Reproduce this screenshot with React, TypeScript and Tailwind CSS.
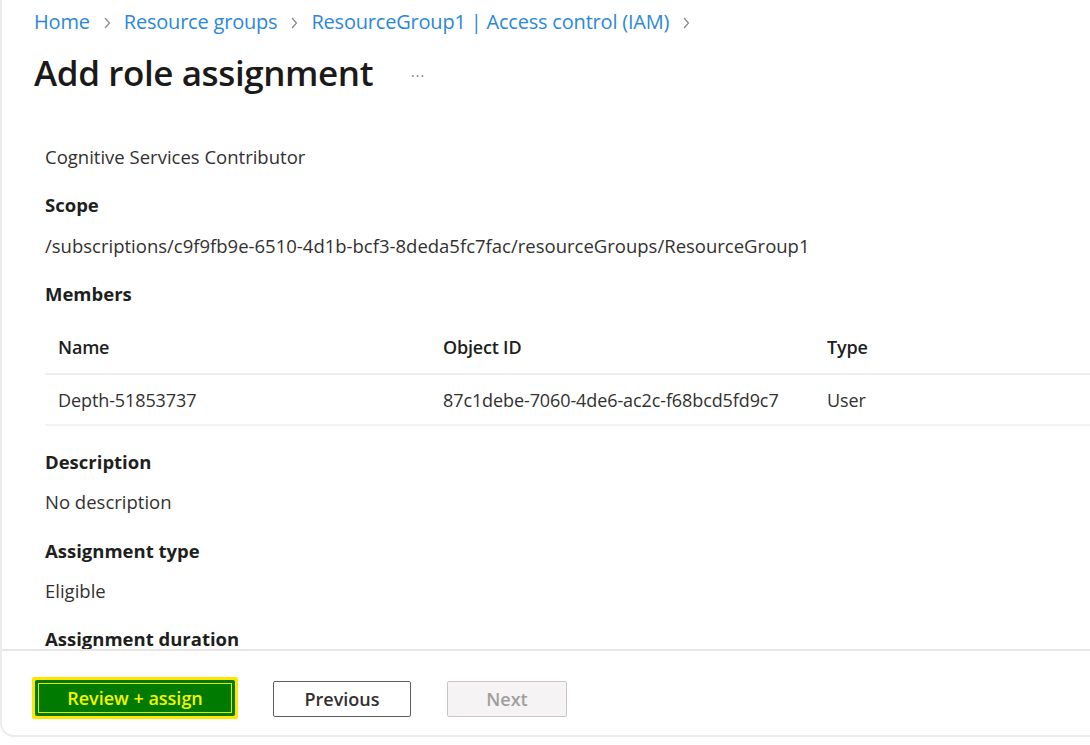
import React from "react";

const font = { fontFamily: '"Open Sans", "Noto Sans", Arial, sans-serif' };

function Chevron() {
  return (
    <svg width="10" height="14" viewBox="0 0 10 14" className="mx-[12px] mt-[2px]">
      <path d="M3 2 L7.5 7 L3 12" fill="none" stroke="#8a8886" strokeWidth="1.2" />
    </svg>
  );
}

export default function App() {
  return (
    <div className="w-[1090px] h-[745px] bg-white overflow-hidden" style={font}>
      <div className="h-[737px] border-l-2 border-b-2 border-[#ececec] rounded-bl-[14px] flex flex-col">
        <div className="flex items-center pl-[32px] pt-[11px] h-[32px] text-[20px] text-[#2b88d8] tracking-[-0.2px]">
          <span>Home</span>
          <Chevron />
          <span>Resource groups</span>
          <Chevron />
          <span>ResourceGroup1 | Access control (IAM)</span>
          <Chevron />
        </div>
        <div className="flex items-center pl-[32px] mt-[21px] h-[40px]">
          <h1 className="text-[35px] font-semibold text-[#1b1a19] tracking-[-0.4px]">Add role assignment</h1>
          <span className="ml-[38px] mt-[4px] text-[#7a7a7a] text-[14px] tracking-[1px]">···</span>
        </div>
        <div className="flex-1 pl-[43px] pt-[52px] text-[#323130] text-[18.5px] overflow-hidden">
          <div className="h-[24px] leading-[24px]">Cognitive Services Contributor</div>
          <div className="mt-[24px] h-[24px] leading-[24px] font-bold text-[#201f1e]">Scope</div>
          <div className="mt-[17px] h-[24px] leading-[24px]">/subscriptions/c9f9fb9e-6510-4d1b-bcf3-8deda5fc7fac/resourceGroups/ResourceGroup1</div>
          <div className="mt-[24px] h-[24px] leading-[24px] font-bold text-[#201f1e]">Members</div>
          <div className="mt-[15px]">
            <div className="grid grid-cols-[385px_384px_1fr] h-[54px] items-center border-b-2 border-[#efefef] pl-[13px] font-semibold text-[#201f1e] text-[18px] tracking-[-0.2px]">
              <span>Name</span>
              <span>Object ID</span>
              <span>Type</span>
            </div>
            <div className="grid grid-cols-[385px_384px_1fr] h-[51px] items-center border-b-2 border-[#f3f3f3] pl-[13px] text-[18px] tracking-[-0.1px]">
              <span className="mt-[2px]">Depth-51853737</span>
              <span className="mt-[2px]">87c1debe-7060-4de6-ac2c-f68bcd5fd9c7</span>
              <span className="mt-[2px]">User</span>
            </div>
          </div>
          <div className="mt-[24px] h-[24px] leading-[24px] font-bold text-[#201f1e]">Description</div>
          <div className="mt-[16px] h-[24px] leading-[24px]">No description</div>
          <div className="mt-[25px] h-[24px] leading-[24px] font-bold text-[#201f1e]">Assignment type</div>
          <div className="mt-[16px] h-[24px] leading-[24px]">Eligible</div>
          <div className="mt-[24px] h-[24px] leading-[24px] font-bold text-[#201f1e]">Assignment duration</div>
        </div>
        <div className="h-[86px] border-t-2 border-[#e8e6e6] flex items-start pt-[26px] pl-[30px]">
          <div className="bg-[#ffe600] p-[3px] rounded-[2px]">
            <button className="w-[200px] h-[36px] bg-[#007a00] border-[2px] border-[#007a00] outline outline-1 outline-[#e6e600] -outline-offset-[4px] text-[#f5f500] font-semibold text-[18px] rounded-[2px]">
              Review + assign
            </button>
          </div>
          <button className="ml-[35px] mt-[4px] w-[138px] h-[36px] border border-[#605e5c] rounded-[2px] text-[#323130] font-semibold text-[18px] bg-white">
            Previous
          </button>
          <button className="ml-[36px] mt-[4px] w-[120px] h-[36px] border border-[#c8c6c4] rounded-[2px] text-[#a19f9d] font-semibold text-[18px] bg-[#f5f3f4]">
            Next
          </button>
        </div>
      </div>
    </div>
  );
}
